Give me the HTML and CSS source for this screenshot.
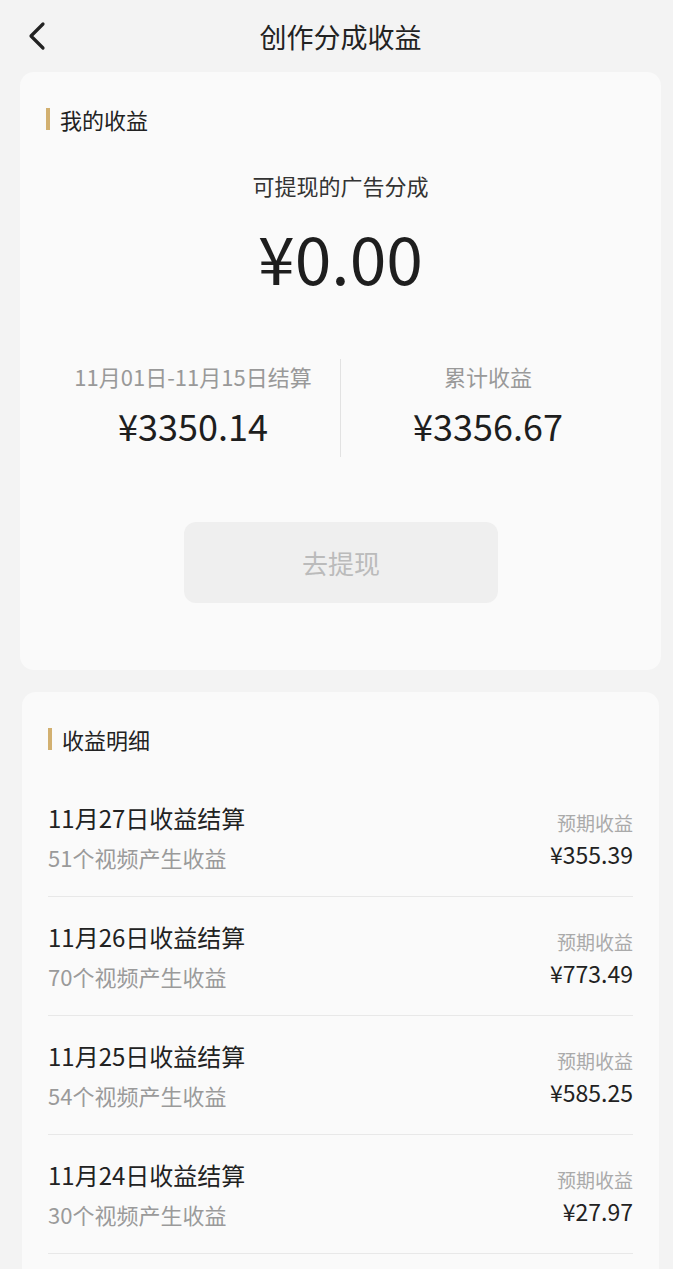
FILE: index.html
```html
<!DOCTYPE html>
<html>
<head>
<meta charset="utf-8">
<title>创作分成收益</title>
<link rel="stylesheet" href="styles.css">
</head>
<body>
	<div class="topbar">
		<a href="#" class="back">
			<svg width="22" height="30" viewBox="0 0 22 30"><path d="M17 3 L5 15 L17 27" fill="none" stroke="#222" stroke-width="3.2" stroke-linecap="round" stroke-linejoin="round"/></svg>
		</a>
		<h1>创作分成收益</h1>
	</div>

	<div class="card summary">
		<h2 class="label">我的收益</h2>
		<p class="avail-tip">可提现的广告分成</p>
		<p class="avail">¥0.00</p>
		<div class="stats">
			<div class="stat">
				<p class="stat-name">11月01日-11月15日结算</p>
				<p class="stat-val">¥3350.14</p>
			</div>
			<div class="stat">
				<p class="stat-name">累计收益</p>
				<p class="stat-val">¥3356.67</p>
			</div>
		</div>
		<a href="#" class="btn">去提现</a>
	</div>

	<div class="card detail">
		<h2 class="label">收益明细</h2>
		<ul class="list">
			<li>
				<div class="left">
					<p class="title">11月27日收益结算</p>
					<p class="sub">51个视频产生收益</p>
				</div>
				<div class="right">
					<p class="hint">预期收益</p>
					<p class="money">¥355.39</p>
				</div>
			</li>
			<li>
				<div class="left">
					<p class="title">11月26日收益结算</p>
					<p class="sub">70个视频产生收益</p>
				</div>
				<div class="right">
					<p class="hint">预期收益</p>
					<p class="money">¥773.49</p>
				</div>
			</li>
			<li>
				<div class="left">
					<p class="title">11月25日收益结算</p>
					<p class="sub">54个视频产生收益</p>
				</div>
				<div class="right">
					<p class="hint">预期收益</p>
					<p class="money">¥585.25</p>
				</div>
			</li>
			<li>
				<div class="left">
					<p class="title">11月24日收益结算</p>
					<p class="sub">30个视频产生收益</p>
				</div>
				<div class="right">
					<p class="hint">预期收益</p>
					<p class="money">¥27.97</p>
				</div>
			</li>
		</ul>
	</div>
</body>
</html>
```

FILE: styles.css
```css
*{
	margin: 0;
	padding: 0;
	text-decoration: none;
	box-sizing: border-box;
}
body{
	background: #f3f3f3;
	font-family: "Noto Sans CJK SC", "Noto Sans", sans-serif;
	color: #222;
	padding: 0 12px 0 20px;
}
.topbar{
	height: 72px;
	display: flex;
	align-items: center;
	justify-content: center;
	position: relative;
}
.back{
	position: absolute;
	left: 6px;
	top: 21px;
	display: block;
}
.topbar h1{
	font-size: 27px;
	font-weight: normal;
	color: #222;
}
.card{
	background: #fafafa;
	border-radius: 14px;
	margin-bottom: 22px;
}
.label{
	font-size: 22px;
	font-weight: normal;
	color: #222;
	border-left: 4px solid #d2b070;
	line-height: 22px;
	padding-left: 10px;
}
.summary{
	padding: 36px 26px 67px 26px;
}
.avail-tip{
	text-align: center;
	font-size: 22px;
	line-height: 30px;
	color: #333;
	margin-top: 40px;
}
.avail{
	text-align: center;
	font-size: 66px;
	line-height: 90px;
	margin-top: 11px;
	color: #1e1e1e;
}
.stats{
	display: flex;
	margin-top: 58px;
}
.stat{
	flex: 1;
	text-align: center;
	padding: 2px 0 8px;
}
.stat:first-child{
	border-right: 1px solid #e2e2e2;
}
.stat-name{
	font-size: 22px;
	color: #999;
	line-height: 30px;
}
.stat-val{
	font-size: 36px;
	line-height: 48px;
	margin-top: 10px;
	color: #1e1e1e;
}
.btn{
	display: block;
	width: 314px;
	height: 81px;
	line-height: 81px;
	margin: 65px 0 0 138px;
	border-radius: 12px;
	background: #efefef;
	color: #bbb;
	font-size: 26px;
	text-align: center;
}
.detail{
	margin: 0 2px 0 2px;
	padding: 36px 26px 60px 26px;
}
.list{
	list-style: none;
	margin-top: 28px;
}
.list li{
	display: flex;
	justify-content: space-between;
	align-items: center;
	height: 119px;
	border-bottom: 1px solid #e8e8e8;
	padding: 0 0 2px 0;
}
.title{
	font-size: 24px;
	line-height: 34px;
	color: #222;
}
.sub{
	font-size: 22px;
	line-height: 30px;
	color: #9a9a9a;
	margin-top: 7px;
}
.right{
	text-align: right;
	padding-top: 8px;
}
.hint{
	font-size: 19px;
	color: #aaa;
	line-height: 26px;
}
.money{
	font-size: 23px;
	line-height: 32px;
	margin-top: 2px;
	color: #222;
}
```
